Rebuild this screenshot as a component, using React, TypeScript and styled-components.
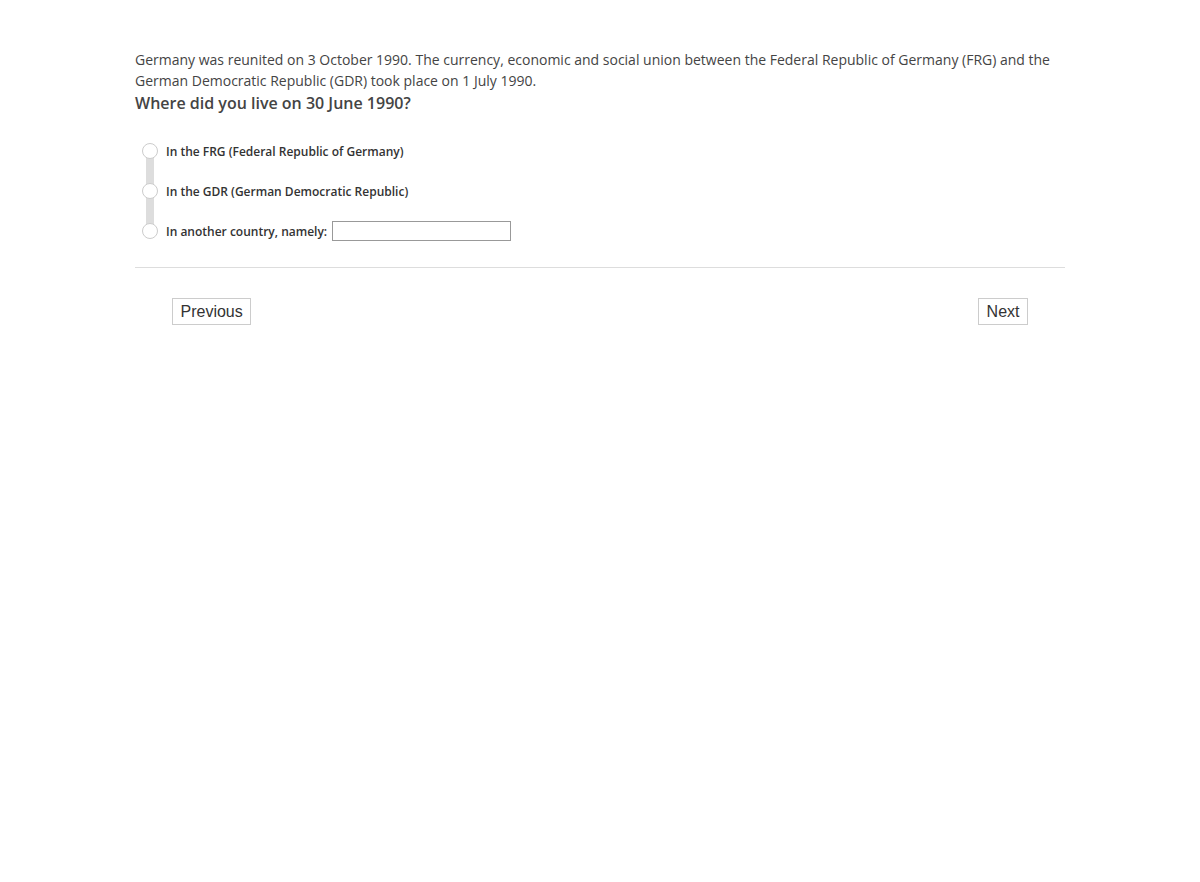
import React from "react";
import styled, { createGlobalStyle } from "styled-components";

const Global = createGlobalStyle`
  html, body { margin: 0; padding: 0; background: #fff; }
  body { font-family: "Open Sans", sans-serif; color: #444; }
`;

const Page = styled.div`
  width: 930px;
  margin: 0 auto;
  padding-top: 49px;
`;

const Intro = styled.p`
  margin: 0;
  font-size: 14px;
  line-height: 21px;
  color: #444;
`;

const Question = styled.h2`
  margin: 0;
  font-size: 16px;
  line-height: 24px;
  font-weight: 600;
  color: #444;
`;

const Options = styled.div`
  position: relative;
  margin-top: 26px;
  padding-left: 7px;
  display: flex;
  flex-direction: column;
  gap: 20px;
`;

const Connector = styled.div`
  position: absolute;
  left: 11px;
  top: 14px;
  width: 8px;
  height: 72px;
  background: #ddd;
`;

const Option = styled.label`
  position: relative;
  display: flex;
  align-items: center;
  height: 20px;
  gap: 8px;
  font-size: 12px;
  font-weight: 600;
  color: #333;
`;

const Radio = styled.span`
  width: 16px;
  height: 16px;
  border-radius: 50%;
  border: 1px solid #ccc;
  background: #fff;
  box-sizing: border-box;
  flex: none;
`;

const TextInput = styled.input`
  width: 179px;
  height: 20px;
  box-sizing: border-box;
  border: 1px solid #999;
  margin-left: -3px;
  padding: 0 4px;
  font-size: 12px;
`;

const Divider = styled.hr`
  border: none;
  border-top: 1px solid #ddd;
  margin: 26px 0 0;
`;

const Nav = styled.div`
  display: flex;
  justify-content: space-between;
  padding: 30px 37px 0;
`;

const Button = styled.button`
  font-family: "Liberation Sans", Arial, sans-serif;
  font-size: 16px;
  color: #333;
  background: #fff;
  border: 1px solid #ccc;
  height: 27px;
  padding: 0 7.5px;
  cursor: pointer;
`;

export default function App() {
  return (
    <>
      <Global />
      <Page>
        <Intro>
          Germany was reunited on 3 October 1990. The currency, economic and social union between the
          Federal Republic of Germany (FRG) and the German Democratic Republic (GDR) took place on 1 July 1990.
        </Intro>
        <Question>Where did you live on 30 June 1990?</Question>
        <Options>
          <Connector />
          <Option>
            <Radio />
            In the FRG (Federal Republic of Germany)
          </Option>
          <Option>
            <Radio />
            In the GDR (German Democratic Republic)
          </Option>
          <Option>
            <Radio />
            In another country, namely:
            <TextInput type="text" />
          </Option>
        </Options>
        <Divider />
        <Nav>
          <Button>Previous</Button>
          <Button>Next</Button>
        </Nav>
      </Page>
    </>
  );
}
